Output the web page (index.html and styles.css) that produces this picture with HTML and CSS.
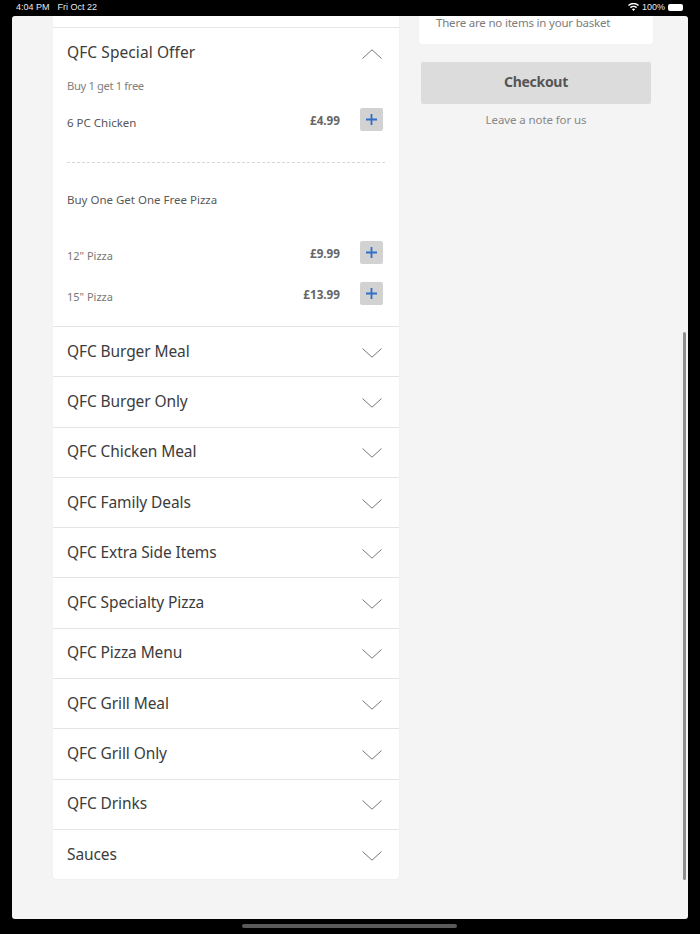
FILE: index.html
```html
<!DOCTYPE html>
<html lang="en">
<head>
<meta charset="utf-8">
<title>QFC Menu</title>
<link rel="stylesheet" href="styles.css">
</head>
<body>
<div class="status">
  <div class="status-left"><span>4:04 PM</span><span>Fri Oct 22</span></div>
  <div class="status-right">
    <svg class="wifi" width="11" height="8" viewBox="0 0 11 8"><path d="M5.500 8 3.900 6.200a2.300 2.300 0 0 1 3.200 0zM2.900 5.200 1.900 4.100a5.200 5.200 0 0 1 7.200 0l-1 1.100a3.800 3.800 0 0 0-5.200 0zM.9 3 0 2a8 8 0 0 1 11 0l-.9 1a6.700 6.700 0 0 0-9.200 0z" fill="#fff"/></svg>
    <span>100%</span>
    <span class="battery"></span>
  </div>
</div>
<main class="screen">
  <div class="scrollbar"></div>
  <div class="content">
    <section class="menu">
      <div class="menu-top"></div>
      <div class="cat cat-open">
        <div class="cat-head">
          <h2 class="open-title">QFC Special Offer</h2>
          <svg class="chev" width="20" height="10" viewBox="0 0 20 10"><path d="M.5 9.500 10 .8l9.500 8.700" fill="none" stroke="#666" stroke-width=".9"/></svg>
        </div>
        <p class="offer-note">Buy 1 get 1 free</p>
        <div class="item item-first">
          <span class="item-name dark">6 PC Chicken</span>
          <span class="price">£4.99</span>
          <button class="add" aria-label="Add"><svg width="11" height="11" viewBox="0 0 11 11"><path d="M5.500 0v11M0 5.500h11" stroke="#2f6fc6" stroke-width="1.800"/></svg></button>
        </div>
        <div class="dash"></div>
        <p class="offer-title">Buy One Get One Free Pizza</p>
        <div class="item item-pizza">
          <span class="item-name">12" Pizza</span>
          <span class="price">£9.99</span>
          <button class="add" aria-label="Add"><svg width="11" height="11" viewBox="0 0 11 11"><path d="M5.500 0v11M0 5.500h11" stroke="#2f6fc6" stroke-width="1.800"/></svg></button>
        </div>
        <div class="item item-next">
          <span class="item-name">15" Pizza</span>
          <span class="price">£13.99</span>
          <button class="add" aria-label="Add"><svg width="11" height="11" viewBox="0 0 11 11"><path d="M5.500 0v11M0 5.500h11" stroke="#2f6fc6" stroke-width="1.800"/></svg></button>
        </div>
      </div>
      <div class="cat"><h2>QFC Burger Meal</h2><svg class="chev" width="20" height="10" viewBox="0 0 20 10"><path d="M.5.500 10 9.200 19.500.5" fill="none" stroke="#666" stroke-width=".9"/></svg></div>
      <div class="cat"><h2>QFC Burger Only</h2><svg class="chev" width="20" height="10" viewBox="0 0 20 10"><path d="M.5.500 10 9.200 19.500.5" fill="none" stroke="#666" stroke-width=".9"/></svg></div>
      <div class="cat"><h2>QFC Chicken Meal</h2><svg class="chev" width="20" height="10" viewBox="0 0 20 10"><path d="M.5.500 10 9.200 19.500.5" fill="none" stroke="#666" stroke-width=".9"/></svg></div>
      <div class="cat"><h2>QFC Family Deals</h2><svg class="chev" width="20" height="10" viewBox="0 0 20 10"><path d="M.5.500 10 9.200 19.500.5" fill="none" stroke="#666" stroke-width=".9"/></svg></div>
      <div class="cat"><h2>QFC Extra Side Items</h2><svg class="chev" width="20" height="10" viewBox="0 0 20 10"><path d="M.5.500 10 9.200 19.500.5" fill="none" stroke="#666" stroke-width=".9"/></svg></div>
      <div class="cat"><h2>QFC Specialty Pizza</h2><svg class="chev" width="20" height="10" viewBox="0 0 20 10"><path d="M.5.500 10 9.200 19.500.5" fill="none" stroke="#666" stroke-width=".9"/></svg></div>
      <div class="cat"><h2>QFC Pizza Menu</h2><svg class="chev" width="20" height="10" viewBox="0 0 20 10"><path d="M.5.500 10 9.200 19.500.5" fill="none" stroke="#666" stroke-width=".9"/></svg></div>
      <div class="cat"><h2>QFC Grill Meal</h2><svg class="chev" width="20" height="10" viewBox="0 0 20 10"><path d="M.5.500 10 9.200 19.500.5" fill="none" stroke="#666" stroke-width=".9"/></svg></div>
      <div class="cat"><h2>QFC Grill Only</h2><svg class="chev" width="20" height="10" viewBox="0 0 20 10"><path d="M.5.500 10 9.200 19.500.5" fill="none" stroke="#666" stroke-width=".9"/></svg></div>
      <div class="cat"><h2>QFC Drinks</h2><svg class="chev" width="20" height="10" viewBox="0 0 20 10"><path d="M.5.500 10 9.200 19.500.5" fill="none" stroke="#666" stroke-width=".9"/></svg></div>
      <div class="cat"><h2>Sauces</h2><svg class="chev" width="20" height="10" viewBox="0 0 20 10"><path d="M.5.500 10 9.200 19.500.5" fill="none" stroke="#666" stroke-width=".9"/></svg></div>
    </section>
    <aside class="side">
      <div class="basket">There are no items in your basket</div>
      <button class="checkout">Checkout</button>
      <p class="note">Leave a note for us</p>
    </aside>
  </div>
</main>
<div class="home-bar"><div class="home-pill"></div></div>
</body>
</html>
```
FILE: styles.css
```css
* { box-sizing: border-box; }
html, body { margin: 0; padding: 0; height: 934px; overflow: hidden; background: #000; }
body { font-family: "Noto Sans", "Open Sans", sans-serif; color: #444; }

.status { height: 16px; padding: 0 17px 2px 16px; display: flex; justify-content: space-between; align-items: center; color: #e8e8e8; font-family: "Liberation Sans", sans-serif; font-size: 9px; }
.status-left { display: flex; gap: 8px; }
.status-right { display: flex; align-items: center; gap: 3px; }
.battery { width: 15px; height: 7px; border-radius: 2px; background: #fff; display: block; }

.screen { position: relative; height: 903px; margin: 0 12px; background: #f4f4f4; border-radius: 3px; overflow: hidden; }
.scrollbar { position: absolute; left: 671px; top: 316px; width: 3px; height: 548px; background: #8f8f8f; border-radius: 2px; }
.content { display: flex; align-items: flex-start; padding-left: 41px; }

.menu { width: 346px; background: #fff; border-radius: 0 0 3px 3px; box-shadow: 0 0 1px #ddd; }
.menu-top { height: 12px; border-bottom: 1px solid #e6e6e6; }

.cat { height: 50.3px; padding: 0 17px 2px 14px; display: flex; align-items: center; justify-content: space-between; border-bottom: 1px solid #e4e4e4; }
.cat:last-child { border-bottom: 0; height: 49px; padding-bottom: 0; }
.cat h2 { margin: 0; font-size: 15.500px; font-weight: 400; letter-spacing: -.1px; color: #3c3c3c; }
.cat .open-title { letter-spacing: .08px; }
.chev { display: block; margin-top: 4px; }

.cat-open { display: block; height: 299px; padding: 0 16px 0 14px; }
.cat-head { height: 48px; display: flex; align-items: center; justify-content: space-between; padding-right: 1px; }
.cat-head .chev { margin-top: 3px; }
.offer-note { margin: 0; padding-top: 1px; font-size: 11.200px; letter-spacing: -.35px; line-height: 18px; color: #808080; }
.item { display: flex; align-items: center; height: 23px; }
.item-first { margin-top: 13px; }
.item-pizza { margin-top: 32px; }
.item-next { margin-top: 18px; }
.item-name { flex: 1; padding-top: 6px; font-size: 11px; color: #777; }
.item-name.dark { font-size: 11.500px; color: #555; }
.price { font-size: 11.700px; font-weight: 700; color: #666; margin-right: 20px; }
.add { width: 23px; height: 23px; padding: 0; border: 0; border-radius: 2px; background: #d2d2d2; display: flex; align-items: center; justify-content: center; }
.dash { margin-top: 31px; width: 318px; border-top: 1px dashed #d8d8d8; }
.offer-title { margin: 0; padding-top: 28px; font-size: 11.500px; line-height: 18px; color: #5a5a5a; }

.side { width: 234px; margin-left: 20px; }
.basket { height: 28px; background: #fff; border-radius: 0 0 2px 2px; box-shadow: 0 0 1px #ddd; padding-left: 17px; font-size: 11.500px; letter-spacing: -.2px; line-height: 14px; color: #7c7c7c; }
.checkout { display: block; width: 230px; height: 42px; margin: 18px 0 0 2px; padding: 0 0 3px; border: 0; border-radius: 2px; background: #dcdcdc; font-family: inherit; font-size: 14px; font-weight: 700; letter-spacing: -.3px; color: #555; }
.note { margin: 7px 0 0; text-align: center; font-size: 11.500px; letter-spacing: -.1px; line-height: 17px; color: #888; }

.home-bar { height: 15px; padding-top: 5px; }
.home-pill { width: 215px; height: 4px; margin-left: 242px; border-radius: 2px; background: #5a5a5a; }
```
